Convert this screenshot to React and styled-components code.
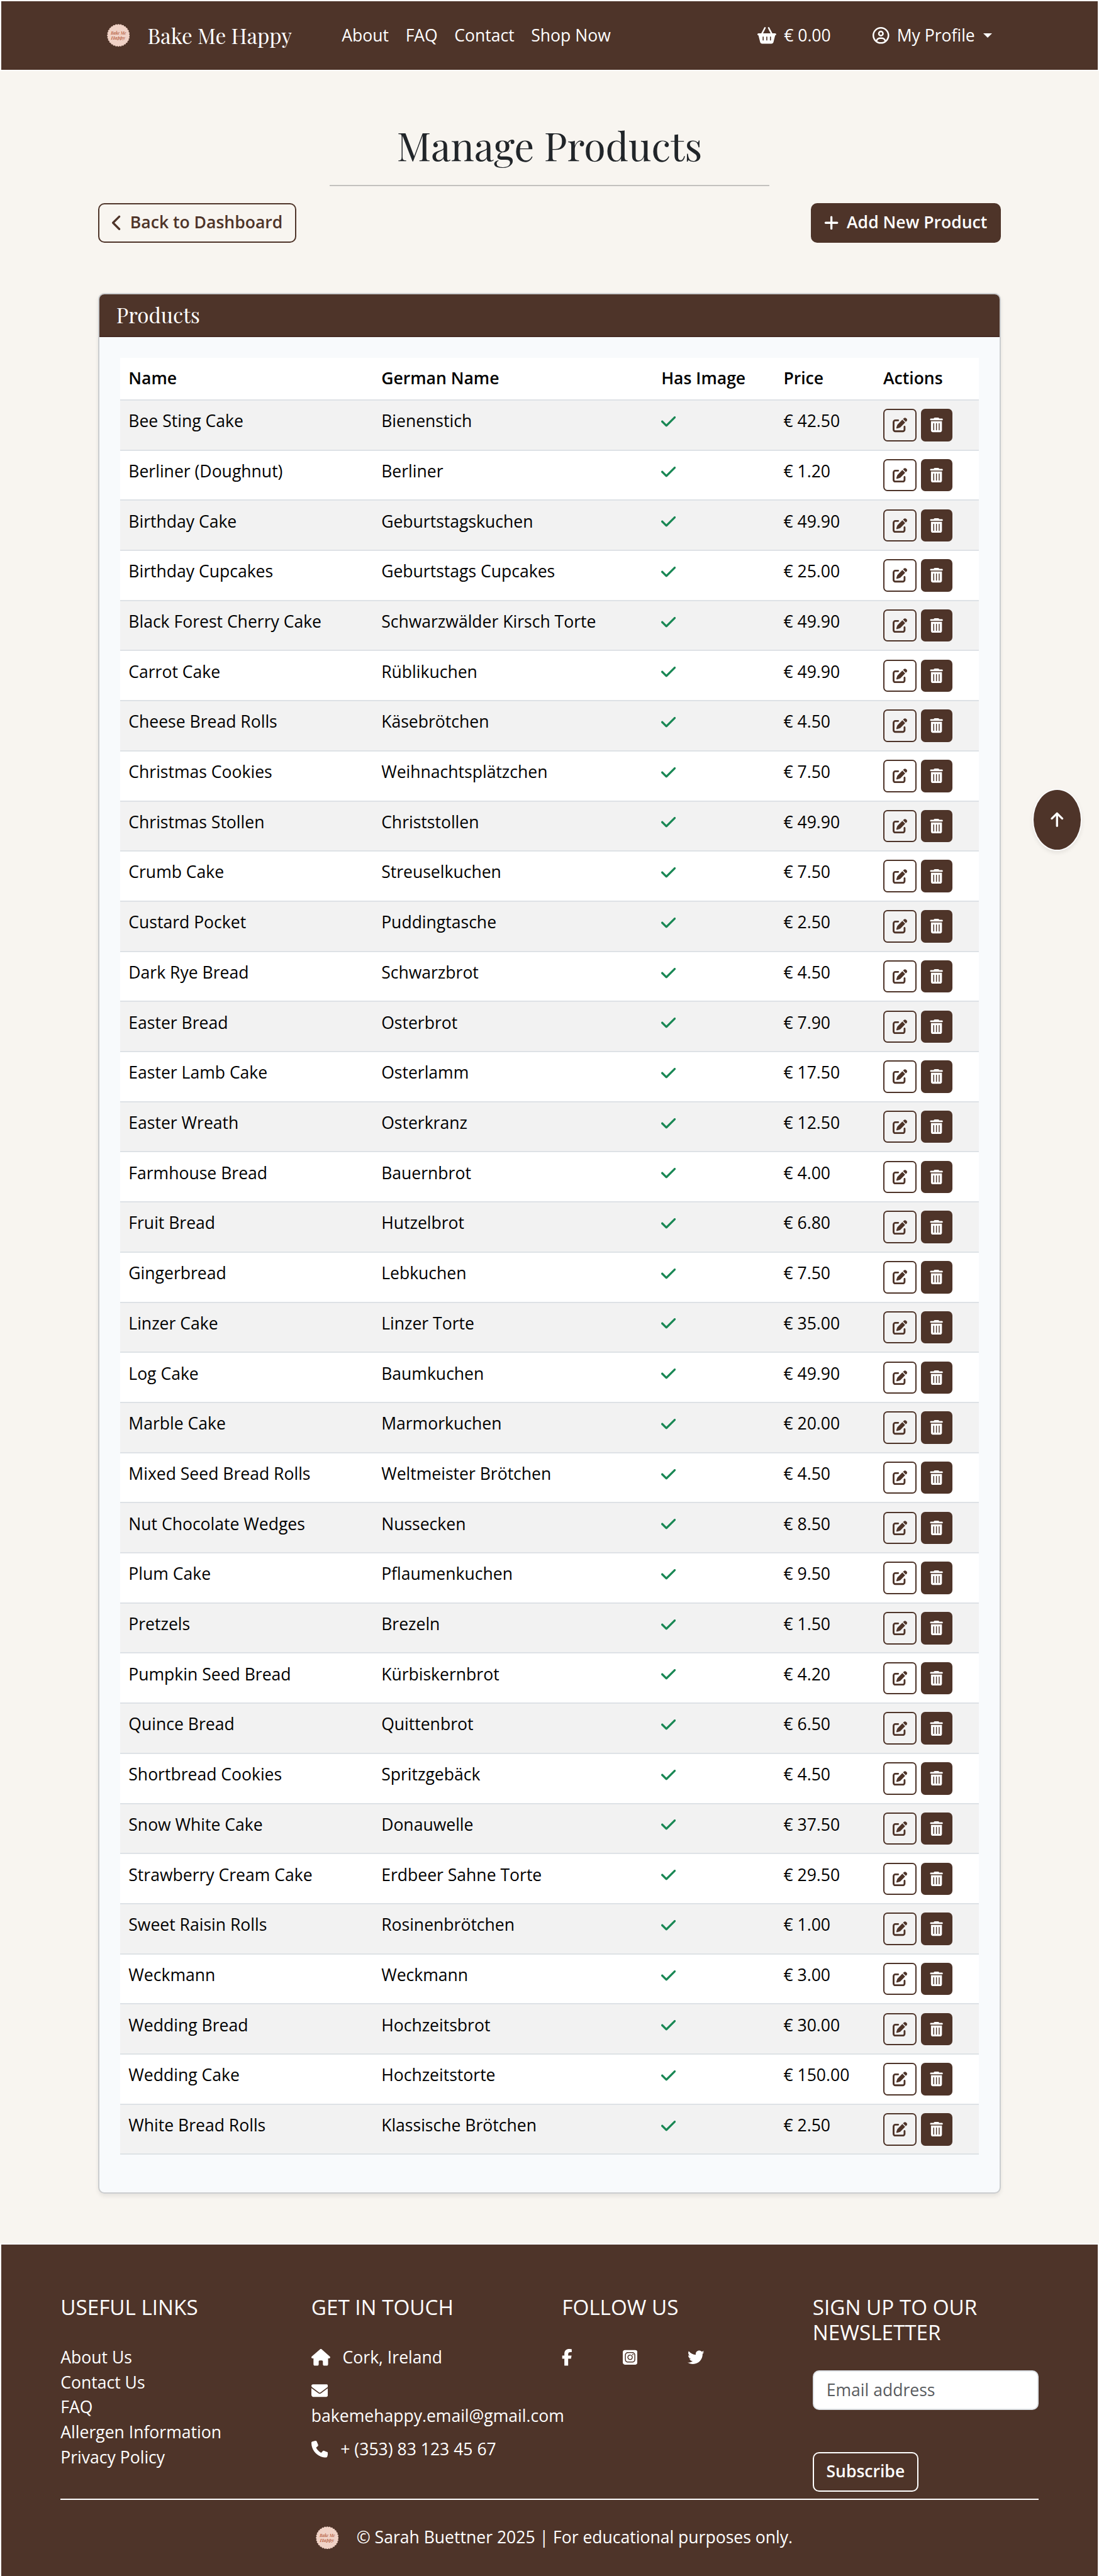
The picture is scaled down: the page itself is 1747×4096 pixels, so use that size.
import React from 'react';
import styled, { createGlobalStyle, css } from 'styled-components';
import {
  FaArrowUp,
  FaBasketShopping,
  FaCheck,
  FaChevronLeft,
  FaEnvelope,
  FaFacebookF,
  FaHouse,
  FaPenToSquare,
  FaPhone,
  FaPlus,
  FaRegCircleUser,
  FaSquareInstagram,
  FaTrashCan,
  FaTwitter,
} from 'react-icons/fa6';

const brown = '#4e3429';
const cream = '#f8f5f0';
const sans = '"Open Sans", "Noto Sans", sans-serif';
const display = '"Playfair Display", "Noto Serif", "Liberation Serif", serif';

const GlobalStyle = createGlobalStyle`
  html { font-size: 26.568px; }
  *, *::before, *::after { box-sizing: border-box; }
  body {
    margin: 0;
    background: ${cream};
    color: #212529;
    font-family: ${sans};
    font-size: 1rem;
    line-height: 1.5;
    overflow-x: hidden;
  }
  svg { display: block; flex: none; }
`;

const Page = styled.div`
  position: relative;
  display: flex;
  flex-direction: column;
  height: 154.17rem;
  overflow: hidden;
`;

/* ---------- navigation ---------- */

const Navbar = styled.nav`
  display: flex;
  align-items: center;
  height: 4.25rem;
  flex: none;
  padding: 0 6.3125rem;
  background: ${brown};
  border: 2px solid #fff;
  color: #fff;
  white-space: nowrap;
`;

const Brand = styled.a`
  display: flex;
  align-items: center;
  gap: 1.0625rem;
  width: 14.0625rem;
  font-family: ${display};
  font-size: 1.25rem;
`;

const NavLinks = styled.div`
  display: flex;
  gap: 1rem;
`;

const NavTools = styled.div`
  display: flex;
  align-items: center;
  gap: 2.5rem;
  margin-left: auto;
`;

const NavTool = styled.a`
  display: flex;
  align-items: center;
  gap: 0.45rem;
`;

const Caret = styled.span`
  margin-left: 0.06rem;
  border-top: 0.3em solid #fff;
  border-left: 0.3em solid transparent;
  border-right: 0.3em solid transparent;
`;

const LogoMark = styled.svg`
  width: 1.375rem;
  height: 1.375rem;
`;

const LogoText = styled.text`
  font-family: ${display};
  font-style: italic;
  font-weight: 600;
  fill: #b3583a;
  text-anchor: middle;
`;

/* ---------- page heading ---------- */

const Main = styled.main`
  display: flex;
  flex-direction: column;
  width: 54rem;
  margin: 3rem auto;
  flex: none;
`;

const Title = styled.h1`
  margin: 0;
  font-family: ${display};
  font-weight: 400;
  font-size: 2.361rem;
  line-height: 1.2;
  text-align: center;
`;

const Rule = styled.hr`
  width: 26.3rem;
  height: 2px;
  margin: 1rem auto calc(1rem - 0.3px);
  border: 0;
  background: #c3c1be;
`;

const Toolbar = styled.div`
  display: flex;
  justify-content: space-between;
  margin-bottom: 3rem;
`;

const Button = styled.button`
  display: inline-flex;
  align-items: center;
  gap: 0.47rem;
  height: 2.375rem;
  padding: 0 calc(0.8125rem - 2px);
  border: 2px solid ${(p) => (p.$light ? '#fff' : brown)};
  border-radius: 0.375rem;
  background: ${(p) => (p.$filled ? brown : 'transparent')};
  color: ${(p) => (p.$filled || p.$light ? '#fff' : brown)};
  font: 600 1rem/1.5 ${sans};
  white-space: nowrap;
`;

/* ---------- products card ---------- */

const Card = styled.section`
  height: 113.75rem;
  border: 2px solid #cbcdcf;
  border-radius: 0.375rem;
  background: #f8fafc;
  box-shadow: 0 0.125rem 0.25rem rgba(0, 0, 0, 0.075);
  overflow: hidden;
`;

const CardHeader = styled.h2`
  display: flex;
  align-items: center;
  height: 2.5625rem;
  margin: 0;
  padding: 0 1rem;
  background: ${brown};
  border-bottom: 2px solid #452a23;
  color: #fff;
  font-family: ${display};
  font-weight: 400;
  font-size: 1.25rem;
`;

const Table = styled.table`
  display: block;
  margin: 1.25rem calc(1.3125rem - 2px) 0;
  color: #000;

  thead, tbody { display: block; }
`;

const Row = styled.tr`
  display: grid;
  grid-template-columns: 484fr 536fr 234fr 191fr 199fr;
  height: ${(p) => (p.$head ? '2.5625rem' : '3rem')};
  background: ${(p) => (p.$striped ? '#f2f2f2' : '#fff')};
  border-bottom: 2px solid #dee2e6;
`;

const cell = css`
  display: flex;
  align-items: center;
  height: 1.5rem;
  margin: 0.5rem 0;
  padding: 0 0.5rem;
  white-space: nowrap;
`;

const HeadCell = styled.th`
  ${cell}
  font-weight: 600;
`;

const Cell = styled.td`
  ${cell}
  ${(p) => p.$actions && css`
    height: 1.9375rem;
    gap: 0.25rem;
  `}
`;

const Check = styled(FaCheck)`
  color: #198754;
  width: 0.875rem;
  height: 1rem;
`;

const IconButton = styled.button`
  display: flex;
  align-items: center;
  justify-content: center;
  width: ${(p) => (p.$filled ? '1.906rem' : '2rem')};
  height: 1.9375rem;
  padding: 0;
  border: 2px solid ${brown};
  border-radius: 0.25rem;
  background: ${(p) => (p.$filled ? brown : 'transparent')};
  color: ${(p) => (p.$filled ? '#fff' : brown)};
  font-size: 0.875rem;
`;

/* ---------- back to top ---------- */

const ToTop = styled.button`
  position: absolute;
  top: 47.19rem;
  right: 1rem;
  display: flex;
  align-items: center;
  justify-content: center;
  width: 3rem;
  height: 3.75rem;
  padding: 0;
  border: 2px solid #fbfbfb;
  border-radius: 50%;
  background: ${brown};
  color: #fff;
  font-size: 1rem;
  box-shadow: 0 0.125rem 0.25rem rgba(0, 0, 0, 0.075);
`;

/* ---------- footer ---------- */

const Footer = styled.footer`
  flex: 1;
  padding: 3rem calc(3.625rem - 2px) 0;
  background: ${brown};
  border: 2px solid #fff;
  border-bottom: 0;
  color: #fff;
`;

const FooterColumns = styled.div`
  display: grid;
  grid-template-columns: repeat(3, 15rem) 13.5rem;
  height: 12.28rem;
  border-bottom: 2px solid #fff;
`;

const FooterTitle = styled.h5`
  margin: 0 0 1.5rem;
  font-weight: 400;
  font-size: 1.25rem;
  line-height: 1.2;
  text-transform: uppercase;
`;

const LinkList = styled.ul`
  margin: 0;
  padding: 0;
  list-style: none;
`;

const Contact = styled.p`
  display: flex;
  flex-wrap: wrap;
  align-items: center;
  column-gap: 0.75rem;
  width: 14rem;
  margin: 0 0 0.5rem;
  white-space: nowrap;

  svg { margin: 0.25rem 0; }
`;

const ContactBreak = styled.span`
  flex-basis: 100%;
`;

const Social = styled.div`
  display: flex;
  align-items: center;
  gap: 3rem;
  height: 1.5rem;
`;

const EmailInput = styled.input`
  display: block;
  width: 100%;
  height: 2.375rem;
  margin-bottom: 2.53rem;
  padding: 0 0.75rem;
  border: 2px solid #dee2e6;
  border-radius: 0.375rem;
  background: #fff;
  font: 400 1rem/1.5 ${sans};

  &::placeholder { color: #595c5f; opacity: 1; }
`;

const Copyright = styled.div`
  display: flex;
  align-items: center;
  justify-content: center;
  gap: 1.0625rem;
  margin-top: 1.5rem;
  padding-left: 0.56rem;
  white-space: nowrap;
`;

const products = [
  ['Bee Sting Cake', 'Bienenstich', '42.50'],
  ['Berliner (Doughnut)', 'Berliner', '1.20'],
  ['Birthday Cake', 'Geburtstagskuchen', '49.90'],
  ['Birthday Cupcakes', 'Geburtstags Cupcakes', '25.00'],
  ['Black Forest Cherry Cake', 'Schwarzwälder Kirsch Torte', '49.90'],
  ['Carrot Cake', 'Rüblikuchen', '49.90'],
  ['Cheese Bread Rolls', 'Käsebrötchen', '4.50'],
  ['Christmas Cookies', 'Weihnachtsplätzchen', '7.50'],
  ['Christmas Stollen', 'Christstollen', '49.90'],
  ['Crumb Cake', 'Streuselkuchen', '7.50'],
  ['Custard Pocket', 'Puddingtasche', '2.50'],
  ['Dark Rye Bread', 'Schwarzbrot', '4.50'],
  ['Easter Bread', 'Osterbrot', '7.90'],
  ['Easter Lamb Cake', 'Osterlamm', '17.50'],
  ['Easter Wreath', 'Osterkranz', '12.50'],
  ['Farmhouse Bread', 'Bauernbrot', '4.00'],
  ['Fruit Bread', 'Hutzelbrot', '6.80'],
  ['Gingerbread', 'Lebkuchen', '7.50'],
  ['Linzer Cake', 'Linzer Torte', '35.00'],
  ['Log Cake', 'Baumkuchen', '49.90'],
  ['Marble Cake', 'Marmorkuchen', '20.00'],
  ['Mixed Seed Bread Rolls', 'Weltmeister Brötchen', '4.50'],
  ['Nut Chocolate Wedges', 'Nussecken', '8.50'],
  ['Plum Cake', 'Pflaumenkuchen', '9.50'],
  ['Pretzels', 'Brezeln', '1.50'],
  ['Pumpkin Seed Bread', 'Kürbiskernbrot', '4.20'],
  ['Quince Bread', 'Quittenbrot', '6.50'],
  ['Shortbread Cookies', 'Spritzgebäck', '4.50'],
  ['Snow White Cake', 'Donauwelle', '37.50'],
  ['Strawberry Cream Cake', 'Erdbeer Sahne Torte', '29.50'],
  ['Sweet Raisin Rolls', 'Rosinenbrötchen', '1.00'],
  ['Weckmann', 'Weckmann', '3.00'],
  ['Wedding Bread', 'Hochzeitsbrot', '30.00'],
  ['Wedding Cake', 'Hochzeitstorte', '150.00'],
  ['White Bread Rolls', 'Klassische Brötchen', '2.50'],
];

const scallops = Array.from({ length: 28 }, (_, i) => {
  const angle = (i / 28) * Math.PI * 2;
  return { x: 22 + Math.cos(angle) * 19.6, y: 22 + Math.sin(angle) * 19.6 };
});

function Logo() {
  return (
    <LogoMark viewBox="0 0 44 44" aria-label="Bake Me Happy logo">
      <g fill="#f0d2c6">
        <circle cx="22" cy="22" r="20.3" />
        {scallops.map((s, i) => (
          <circle key={i} cx={s.x} cy={s.y} r="2.2" />
        ))}
      </g>
      <LogoText x="22" y="21" fontSize="8.6" textLength="29" lengthAdjust="spacingAndGlyphs">Bake Me</LogoText>
      <LogoText x="21.5" y="30" fontSize="9" textLength="27" lengthAdjust="spacingAndGlyphs">Happy</LogoText>
    </LogoMark>
  );
}

export default function App() {
  return (
    <Page>
      <GlobalStyle />
      <Navbar>
        <Brand>
          <Logo />
          Bake Me Happy
        </Brand>
        <NavLinks>
          <a>About</a>
          <a>FAQ</a>
          <a>Contact</a>
          <a>Shop Now</a>
        </NavLinks>
        <NavTools>
          <NavTool>
            <FaBasketShopping style={{ width: '1.125em' }} />
            <span>€ 0.00</span>
          </NavTool>
          <NavTool>
            <FaRegCircleUser />
            <span>My Profile</span>
            <Caret />
          </NavTool>
        </NavTools>
      </Navbar>

      <Main>
        <Title>Manage Products</Title>
        <Rule />
        <Toolbar>
          <Button>
            <FaChevronLeft style={{ width: '0.625em' }} />
            Back to Dashboard
          </Button>
          <Button $filled>
            <FaPlus style={{ width: '0.875em' }} />
            Add New Product
          </Button>
        </Toolbar>

        <Card>
          <CardHeader>Products</CardHeader>
          <Table>
            <thead>
              <Row $head>
                <HeadCell>Name</HeadCell>
                <HeadCell>German Name</HeadCell>
                <HeadCell>Has Image</HeadCell>
                <HeadCell>Price</HeadCell>
                <HeadCell>Actions</HeadCell>
              </Row>
            </thead>
            <tbody>
              {products.map(([name, german, price], i) => (
                <Row key={name} $striped={i % 2 === 0}>
                  <Cell>{name}</Cell>
                  <Cell>{german}</Cell>
                  <Cell><Check /></Cell>
                  <Cell>€ {price}</Cell>
                  <Cell $actions>
                    <IconButton aria-label="Edit"><FaPenToSquare /></IconButton>
                    <IconButton $filled aria-label="Delete"><FaTrashCan /></IconButton>
                  </Cell>
                </Row>
              ))}
            </tbody>
          </Table>
        </Card>
      </Main>

      <ToTop aria-label="Back to top"><FaArrowUp /></ToTop>

      <Footer>
        <FooterColumns>
          <div>
            <FooterTitle>Useful links</FooterTitle>
            <LinkList>
              <li>About Us</li>
              <li>Contact Us</li>
              <li>FAQ</li>
              <li>Allergen Information</li>
              <li>Privacy Policy</li>
            </LinkList>
          </div>
          <div>
            <FooterTitle>Get in touch</FooterTitle>
            <Contact>
              <FaHouse style={{ width: '1.125em' }} />
              Cork, Ireland
            </Contact>
            <Contact>
              <FaEnvelope />
              <ContactBreak>bakemehappy.email@gmail.com</ContactBreak>
            </Contact>
            <Contact>
              <FaPhone />
              + (353) 83 123 45 67
            </Contact>
          </div>
          <div>
            <FooterTitle>Follow us</FooterTitle>
            <Social>
              <FaFacebookF style={{ width: '0.625em' }} />
              <FaSquareInstagram style={{ width: '0.875em' }} />
              <FaTwitter />
            </Social>
          </div>
          <div>
            <FooterTitle>Sign up to our newsletter</FooterTitle>
            <EmailInput placeholder="Email address" />
            <Button $light>Subscribe</Button>
          </div>
        </FooterColumns>
        <Copyright>
          <Logo />
          © Sarah Buettner 2025 | For educational purposes only.
        </Copyright>
      </Footer>
    </Page>
  );
}
